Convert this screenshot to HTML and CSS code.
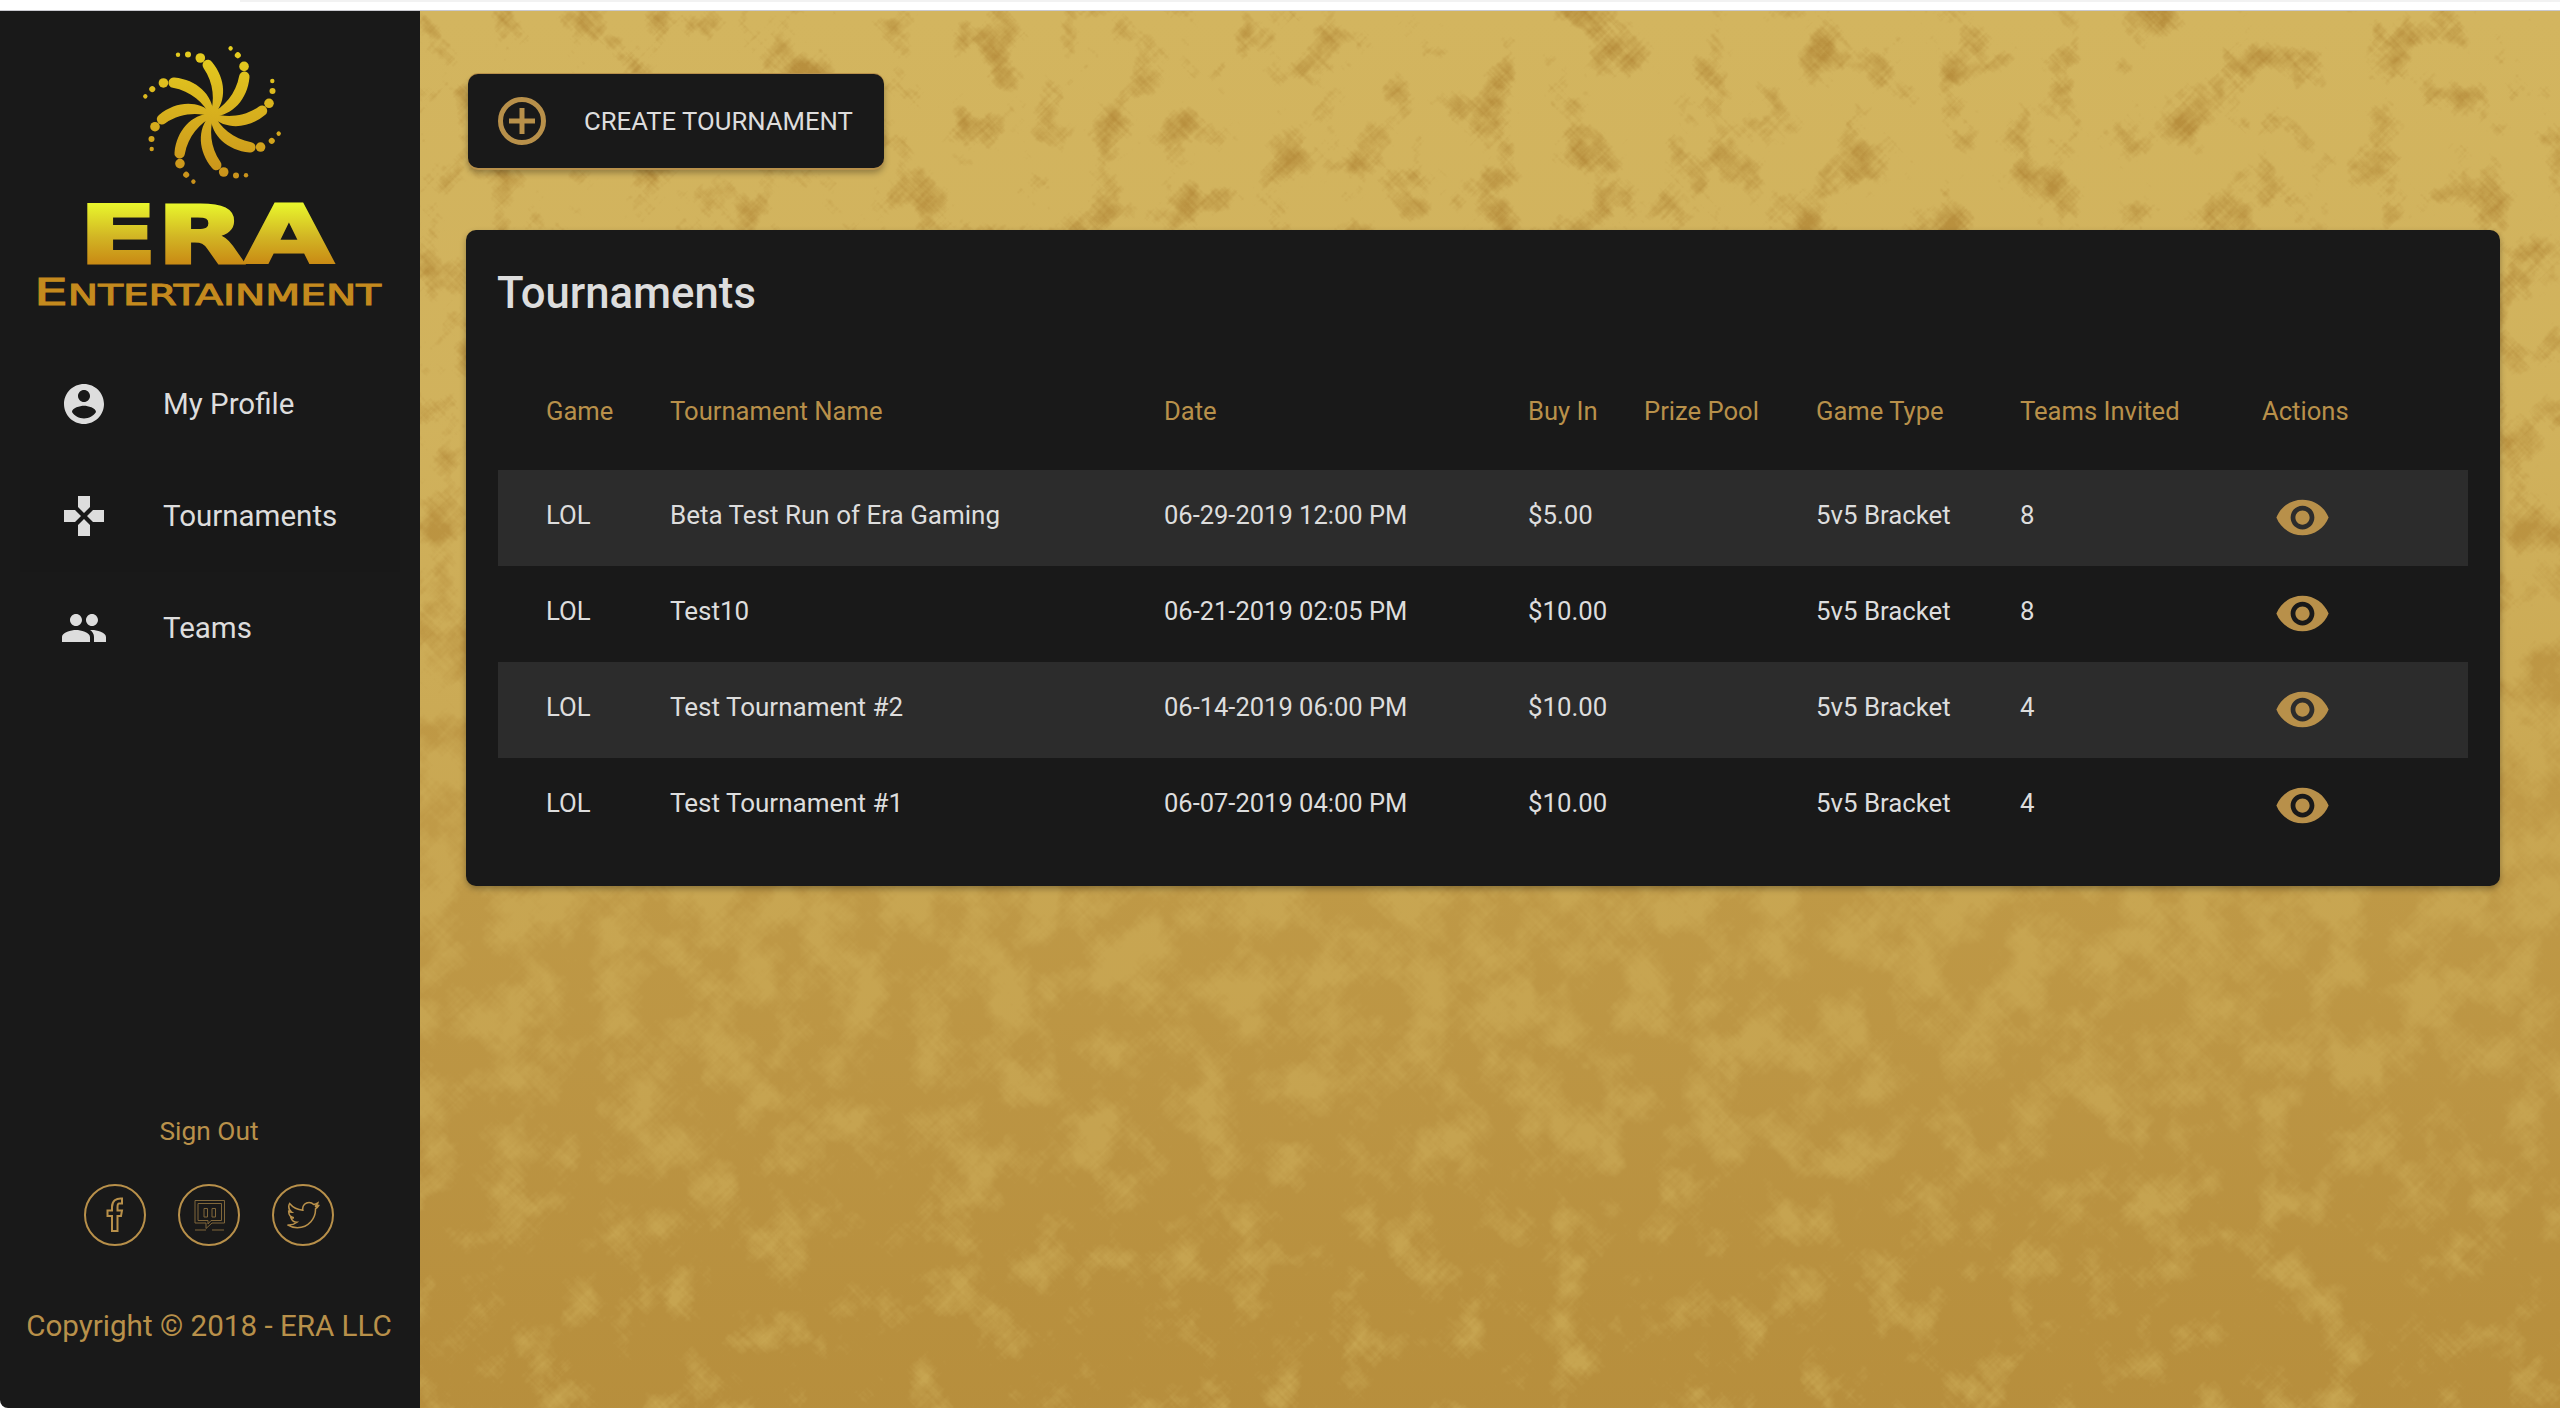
FILE: index.html
```html
<!DOCTYPE html>
<html lang="en">
<head>
<meta charset="utf-8">
<title>Tournaments - ERA Entertainment</title>
<link rel="stylesheet" href="styles.css">
</head>
<body>
<div class="topbar"></div>
<div class="layout">
  <aside class="sidebar">
    <svg class="logo" viewBox="0 11 420 337" role="img" aria-label="ERA Entertainment">
      <defs>
        <linearGradient id="swirlGrad" x1="0" y1="0" x2="0" y2="1">
          <stop offset="0" stop-color="#e8d420"/>
          <stop offset="1" stop-color="#c4861a"/>
        </linearGradient>
        <linearGradient id="eraGrad" x1="0" y1="204" x2="0" y2="264" gradientUnits="userSpaceOnUse">
          <stop offset="0" stop-color="#e8f52c"/>
          <stop offset="0.55" stop-color="#d2b524"/>
          <stop offset="1" stop-color="#c98a14"/>
        </linearGradient>
        <g id="arm">
          <path d="M-2 0C3-14 2-32-8.500-47A5 5 0 0 1 0-53C14-36 15-14 2 0Z"/>
          <circle cx="-11.700" cy="-57" r="4.800"/>
          <circle cx="-24" cy="-60.500" r="3"/>
          <circle cx="-34" cy="-60.300" r="2.200"/>
        </g>
        <mask id="swirlMask" maskUnits="userSpaceOnUse" x="130" y="35" width="170" height="170">
          <g transform="translate(212 115)" fill="#fff">
            <use href="#arm"/>
            <use href="#arm" transform="rotate(45)"/>
            <use href="#arm" transform="rotate(90)"/>
            <use href="#arm" transform="rotate(135)"/>
            <use href="#arm" transform="rotate(180)"/>
            <use href="#arm" transform="rotate(225)"/>
            <use href="#arm" transform="rotate(270)"/>
            <use href="#arm" transform="rotate(315)"/>
          </g>
        </mask>
      </defs>
      <rect x="130" y="35" width="170" height="170" fill="url(#swirlGrad)" mask="url(#swirlMask)"/>
      <text class="logo-era" x="79" y="263" textLength="254" lengthAdjust="spacingAndGlyphs" fill="url(#eraGrad)" stroke="url(#eraGrad)">ERA</text>
      <text class="logo-ent" x="34" y="305" textLength="347" lengthAdjust="spacingAndGlyphs" fill="#c48a1e" stroke="#c48a1e">E<tspan class="logo-ent-small">NTERTAINMENT</tspan></text>
    </svg>

    <nav class="nav">
      <a class="nav-item">
        <svg class="nav-icon" viewBox="0 0 24 24"><path d="M12 2C6.48 2 2 6.48 2 12s4.48 10 10 10 10-4.48 10-10S17.52 2 12 2zm0 3c1.66 0 3 1.34 3 3s-1.34 3-3 3-3-1.34-3-3 1.34-3 3-3zm0 14.2c-2.5 0-4.71-1.28-6-3.22.03-1.99 4-3.08 6-3.08 1.99 0 5.97 1.09 6 3.08-1.29 1.94-3.5 3.22-6 3.22z"/></svg>
        <span>My Profile</span>
      </a>
      <a class="nav-item nav-item-active">
        <svg class="nav-icon" viewBox="0 0 24 24"><path d="M15 7.5V2H9v5.5l3 3 3-3zM7.5 9H2v6h5.5l3-3-3-3zM9 16.5V22h6v-5.5l-3-3-3 3zM16.5 9l-3 3 3 3H22V9h-5.5z"/></svg>
        <span>Tournaments</span>
      </a>
      <a class="nav-item">
        <svg class="nav-icon" viewBox="0 0 24 24"><path d="M16 11c1.66 0 2.99-1.34 2.99-3S17.66 5 16 5c-1.66 0-3 1.34-3 3s1.34 3 3 3zm-8 0c1.66 0 2.99-1.34 2.99-3S9.66 5 8 5C6.34 5 5 6.34 5 8s1.34 3 3 3zm0 2c-2.33 0-7 1.17-7 3.5V19h14v-2.5c0-2.33-4.67-3.5-7-3.5zm8 0c-.29 0-.62.02-.97.05 1.16.84 1.97 1.97 1.97 3.45V19h6v-2.5c0-2.33-4.67-3.5-7-3.5z"/></svg>
        <span>Teams</span>
      </a>
    </nav>

    <div class="side-foot">
      <a class="sign-out">Sign Out</a>
      <div class="socials">
        <svg class="social" viewBox="-31 -31 62 62"><circle r="30"/><path d="M-3 16V1H-7.5V-4.5H-3V-8C-3-14 1-17 7-16.5V-11.5H4C2.5-11.5 2.5-10 2.5-8V-4.5H7L6 1H2.5V16Z"/></svg>
        <svg class="social" viewBox="-31 -31 62 62"><circle r="30"/><g class="twitch"><path d="M-14-14.5H15.500V8H3L-3 13.500V8H-14Z"/><path d="M-11-11.500H12.500V5.500H2L-1 9V5.500H-11Z"/><path d="M-5-6.500H-1.500V2H-5ZM3-6.500H6.500V2H3Z"/><path d="M-14 15H-3M3 15H15"/></g></svg>
        <svg class="social" viewBox="-31 -31 62 62"><circle r="30"/><path transform="translate(-15.500 -15.500) scale(1.3)" stroke-width="1.2" d="M23.954 4.569c-.885.389-1.83.654-2.825.775 1.014-.611 1.794-1.574 2.163-2.723-.951.555-2.005.959-3.127 1.184-.896-.959-2.173-1.559-3.591-1.559-2.717 0-4.92 2.203-4.92 4.917 0 .39.045.765.127 1.124C7.691 8.094 4.066 6.13 1.64 3.161c-.427.722-.666 1.561-.666 2.475 0 1.71.87 3.213 2.188 4.096-.807-.026-1.566-.248-2.228-.616v.061c0 2.385 1.693 4.374 3.946 4.827-.413.111-.849.171-1.296.171-.314 0-.615-.03-.916-.086.631 1.953 2.445 3.377 4.604 3.417-1.68 1.319-3.809 2.105-6.102 2.105-.39 0-.779-.023-1.17-.067 2.189 1.394 4.768 2.209 7.557 2.209 9.054 0 13.999-7.496 13.999-13.986 0-.209 0-.42-.015-.63.961-.689 1.8-1.56 2.46-2.548l-.047-.02z"/></svg>
      </div>
      <p class="copyright">Copyright © 2018 - ERA LLC</p>
    </div>
  </aside>

  <main class="main">
    <svg class="texture" aria-hidden="true" width="2140" height="1397">
      <defs>
        <linearGradient id="fade" gradientUnits="userSpaceOnUse" x1="0" y1="0" x2="988" y2="988">
          <stop offset="0" stop-color="#000"/>
          <stop offset="0.3" stop-color="#141414"/>
          <stop offset="0.65" stop-color="#3c3c3c"/>
          <stop offset="1" stop-color="#6e6e6e"/>
        </linearGradient>
        <linearGradient id="veil" x1="0" y1="0" x2="0" y2="1">
          <stop offset="0" stop-color="#c4a04c" stop-opacity="0"/>
          <stop offset="0.3" stop-color="#c4a04c" stop-opacity="0.15"/>
          <stop offset="0.58" stop-color="#c4a04c" stop-opacity="0.68"/>
          <stop offset="0.8" stop-color="#bd9746" stop-opacity="0.6"/>
          <stop offset="1" stop-color="#b68e3c" stop-opacity="0.4"/>
        </linearGradient>
        <filter id="gold" filterUnits="userSpaceOnUse" x="-10" y="-1530" width="2530" height="2530" color-interpolation-filters="sRGB">
          <feTurbulence type="fractalNoise" baseFrequency="0.02" numOctaves="5" seed="7" result="blotch"/>
          <feTurbulence type="fractalNoise" baseFrequency="0.02 0.3" numOctaves="2" seed="3" result="hatchA"/>
          <feTurbulence type="fractalNoise" baseFrequency="0.3 0.02" numOctaves="2" seed="11" result="hatchB"/>
          <feColorMatrix in="blotch" type="matrix" values="1 0 0 0 0 1 0 0 0 0 1 0 0 0 0 0 0 0 0 1" result="b"/>
          <feColorMatrix in="hatchA" type="matrix" values="1 0 0 0 0 1 0 0 0 0 1 0 0 0 0 0 0 0 0 1" result="a1"/>
          <feColorMatrix in="hatchB" type="matrix" values="1 0 0 0 0 1 0 0 0 0 1 0 0 0 0 0 0 0 0 1" result="a2"/>
          <feComposite in="a1" in2="a2" operator="arithmetic" k1="0" k2="0.5" k3="0.5" k4="0" result="hatch"/>
          <feComposite in="b" in2="hatch" operator="arithmetic" k1="0" k2="0.75" k3="0.25" k4="0" result="mix"/>
          <feComposite in="mix" in2="SourceGraphic" operator="arithmetic" k1="0" k2="1" k3="0.75" k4="0" result="sum"/>
          <feColorMatrix in="sum" type="matrix" values="0 0 0 0 0.72 0 0 0 0 0.56 0 0 0 0 0.24 4.5 0 0 0 -2.5" result="dark"/>
          <feFlood flood-color="#d3b55f" result="light"/>
          <feMerge><feMergeNode in="light"/><feMergeNode in="dark"/></feMerge>
        </filter>
      </defs>
      <g transform="rotate(45)">
        <rect x="-10" y="-1530" width="2530" height="2530" fill="url(#fade)" filter="url(#gold)"/>
      </g>
      <rect width="2140" height="1397" fill="url(#veil)"/>
    </svg>

    <button class="create-btn" type="button">
      <svg class="create-icon" viewBox="0 0 48 48"><circle cx="24" cy="24" r="21.500"/><path d="M24 11V37M11 24H37"/></svg>
      <span>CREATE TOURNAMENT</span>
    </button>

    <section class="card">
      <h2 class="card-title">Tournaments</h2>
      <table class="table">
        <colgroup>
          <col class="c-game"><col class="c-name"><col class="c-date"><col class="c-buy"><col class="c-prize"><col class="c-type"><col class="c-teams"><col class="c-actions">
        </colgroup>
        <thead>
          <tr><th>Game</th><th>Tournament Name</th><th>Date</th><th>Buy In</th><th>Prize Pool</th><th>Game Type</th><th>Teams Invited</th><th>Actions</th></tr>
        </thead>
        <tbody>
          <tr><td>LOL</td><td class="td-name">Beta Test Run of Era Gaming</td><td class="td-date">06-29-2019 12:00 PM</td><td>$5.00</td><td></td><td>5v5 Bracket</td><td>8</td><td><svg class="eye" viewBox="0 0 24 24"><path d="M12 4.500C7 4.500 2.730 7.610 1 12c1.730 4.390 6 7.500 11 7.500s9.270-3.110 11-7.500c-1.730-4.390-6-7.500-11-7.500zM12 17c-2.760 0-5-2.240-5-5s2.240-5 5-5 5 2.240 5 5-2.240 5-5 5zm0-8c-1.660 0-3 1.340-3 3s1.340 3 3 3 3-1.340 3-3-1.340-3-3-3z"/></svg></td></tr>
          <tr><td>LOL</td><td class="td-name">Test10</td><td class="td-date">06-21-2019 02:05 PM</td><td>$10.00</td><td></td><td>5v5 Bracket</td><td>8</td><td><svg class="eye" viewBox="0 0 24 24"><path d="M12 4.500C7 4.500 2.730 7.610 1 12c1.730 4.390 6 7.500 11 7.500s9.270-3.110 11-7.500c-1.730-4.390-6-7.500-11-7.500zM12 17c-2.760 0-5-2.240-5-5s2.240-5 5-5 5 2.240 5 5-2.240 5-5 5zm0-8c-1.660 0-3 1.340-3 3s1.340 3 3 3 3-1.340 3-3-1.340-3-3-3z"/></svg></td></tr>
          <tr><td>LOL</td><td class="td-name">Test Tournament #2</td><td class="td-date">06-14-2019 06:00 PM</td><td>$10.00</td><td></td><td>5v5 Bracket</td><td>4</td><td><svg class="eye" viewBox="0 0 24 24"><path d="M12 4.500C7 4.500 2.730 7.610 1 12c1.730 4.390 6 7.500 11 7.500s9.270-3.110 11-7.500c-1.730-4.390-6-7.500-11-7.500zM12 17c-2.760 0-5-2.240-5-5s2.240-5 5-5 5 2.240 5 5-2.240 5-5 5zm0-8c-1.660 0-3 1.340-3 3s1.340 3 3 3 3-1.340 3-3-1.340-3-3-3z"/></svg></td></tr>
          <tr><td>LOL</td><td class="td-name">Test Tournament #1</td><td class="td-date">06-07-2019 04:00 PM</td><td>$10.00</td><td></td><td>5v5 Bracket</td><td>4</td><td><svg class="eye" viewBox="0 0 24 24"><path d="M12 4.500C7 4.500 2.730 7.610 1 12c1.730 4.390 6 7.500 11 7.500s9.270-3.110 11-7.500c-1.730-4.390-6-7.500-11-7.500zM12 17c-2.760 0-5-2.240-5-5s2.240-5 5-5 5 2.240 5 5-2.240 5-5 5zm0-8c-1.660 0-3 1.340-3 3s1.340 3 3 3 3-1.340 3-3-1.340-3-3-3z"/></svg></td></tr>
        </tbody>
      </table>
    </section>
  </main>
</div>
</body>
</html>
```

FILE: styles.css
```css
* { box-sizing: border-box; }

html, body {
  margin: 0;
  height: 1408px;
  overflow: hidden;
  background: #fff;
  font-family: Roboto, "Liberation Sans", sans-serif;
}

.topbar {
  height: 11px;
  background: linear-gradient(#f2f2f2, #f2f2f2) no-repeat 240px 0 / 100% 2px, #fff;
  border-bottom: 1px solid #c9c9cf;
}

.layout {
  display: flex;
  height: 1397px;
}

/* Sidebar */
.sidebar {
  width: 420px;
  flex: none;
  display: flex;
  flex-direction: column;
  background: #191919;
  color: #ddd;
  border-bottom-left-radius: 8px;
}

.logo {
  display: block;
  width: 420px;
  height: 337px;
  flex: none;
}

.logo-era {
  font-family: "DejaVu Sans", sans-serif;
  font-weight: 700;
  font-size: 80px;
  stroke-width: 3px;
}

.logo-ent {
  font-family: "DejaVu Sans", sans-serif;
  font-weight: 400;
  font-size: 37px;
  stroke-width: 1px;
}

.logo-ent-small { font-size: 28px; }

.nav {
  display: flex;
  flex-direction: column;
}

.nav-item {
  display: flex;
  align-items: center;
  gap: 55px;
  height: 112px;
  margin: 0 20px;
  padding-left: 40px;
  font-size: 29.5px;
  color: #ddd;
}

.nav-item-active { background: #181818; }

.nav-icon {
  width: 48px;
  height: 48px;
  flex: none;
  fill: #ddd;
}

.side-foot {
  margin-top: auto;
  display: flex;
  flex-direction: column;
  align-items: center;
  padding: 0 2px 62px 0;
  color: #b8904a;
}

.sign-out {
  font-size: 26.3px;
  line-height: 36px;
}

.socials {
  display: flex;
  gap: 32px;
  margin-top: 35px;
}

.social {
  width: 62px;
  height: 62px;
  fill: none;
  stroke: #b8904a;
  stroke-width: 2;
}

.social .twitch {
  stroke: #80673a;
  stroke-width: 1;
}

.copyright {
  margin: 60px 0 0;
  font-size: 29.6px;
  line-height: 40px;
  white-space: nowrap;
}

/* Main */
.main {
  position: relative;
  flex: 1;
  min-width: 0;
  padding: 63px 60px 0 46px;
  overflow: hidden;
  background: #c5a44f;
}

.texture {
  position: absolute;
  top: 0;
  left: 0;
  display: block;
}

.create-btn {
  position: relative;
  display: flex;
  align-items: center;
  gap: 38px;
  width: 416px;
  height: 94px;
  margin: 0 0 62px 2px;
  padding: 0 0 0 30px;
  border: 0;
  border-radius: 10px;
  background: #191919;
  color: #ddd;
  font-family: inherit;
  font-size: 25.7px;
  box-shadow: 0 2px 0 #b8904a, 0 -1px 0 #b8904a, 0 5px 6px rgba(0, 0, 0, .3);
  white-space: nowrap;
}

.create-icon {
  width: 48px;
  height: 48px;
  flex: none;
  fill: none;
  stroke: #b8904a;
  stroke-width: 5;
}

.card {
  position: relative;
  height: 656px;
  padding: 32px;
  border-radius: 10px;
  background: #191919;
  box-shadow: 0 3px 6px rgba(0, 0, 0, .3);
}

.card-title {
  margin: 0 0 30px -1px;
  padding-top: 1px;
  font-size: 43.7px;
  line-height: 61px;
  font-weight: 500;
  color: #ddd;
}

.table {
  width: 1970px;
  border-collapse: collapse;
  table-layout: fixed;
  font-size: 25.8px;
}

.c-game { width: 172px; }
.c-name { width: 494px; }
.c-date { width: 364px; }
.c-buy { width: 116px; }
.c-prize { width: 172px; }
.c-type { width: 204px; }
.c-teams { width: 242px; }
.c-actions { width: 206px; }

.table th {
  height: 116px;
  padding: 0 0 2px;
  text-align: left;
  font-size: 25.6px;
  font-weight: 400;
  color: #b8904a;
  white-space: nowrap;
}

.table td {
  height: 96px;
  padding: 0 0 6px;
  color: #ddd;
  white-space: nowrap;
}

.table td.td-name { font-size: 26px; }
.table td.td-date { font-size: 25.5px; }

.table th:first-child,
.table td:first-child { padding-left: 48px; }

.table tbody tr:nth-child(odd) { background: #2c2c2c; }

.table td:last-child { padding-bottom: 1px; }

.eye {
  display: block;
  width: 57px;
  height: 57px;
  margin-left: 12px;
  fill: #b8904a;
}
```
